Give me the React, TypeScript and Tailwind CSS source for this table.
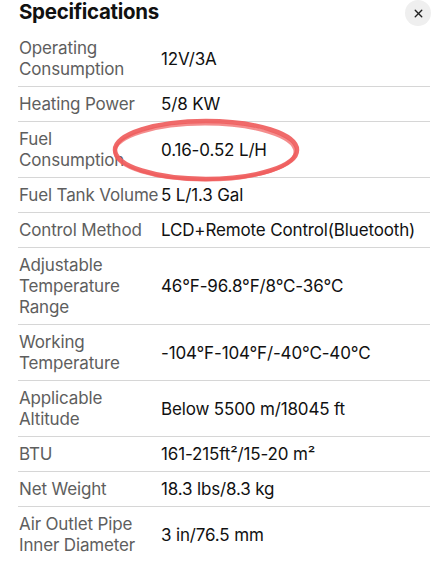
import { X } from 'lucide-react';

type Spec = { label: string[]; value: string };

const specs: Spec[] = [
  { label: ['Operating', 'Consumption'], value: '12V/3A' },
  { label: ['Heating Power'], value: '5/8 KW' },
  { label: ['Fuel', 'Consumption'], value: '0.16-0.52 L/H' },
  { label: ['Fuel Tank Volume'], value: '5 L/1.3 Gal' },
  { label: ['Control Method'], value: 'LCD+Remote Control(Bluetooth)' },
  { label: ['Adjustable', 'Temperature', 'Range'], value: '46°F-96.8°F/8°C-36°C' },
  { label: ['Working', 'Temperature'], value: '-104°F-104°F/-40°C-40°C' },
  { label: ['Applicable', 'Altitude'], value: 'Below 5500 m/18045 ft' },
  { label: ['BTU'], value: '161-215ft²/15-20 m²' },
  { label: ['Net Weight'], value: '18.3 lbs/8.3 kg' },
  { label: ['Air Outlet Pipe', 'Inner Diameter'], value: '3 in/76.5 mm' },
];

export default function App() {
  return (
    <div className="relative w-[448px] h-[575px] overflow-hidden bg-white px-[18px] font-['Inter','Liberation_Sans',sans-serif]">
      <div className="flex h-[31px] items-start justify-between">
        <h2 className="pl-px text-[20.5px] font-bold leading-[24px] tracking-[-0.3px] text-[#111]">
          Specifications
        </h2>
        <button
          className="-mr-px flex h-[26px] w-[26px] items-center justify-center rounded-full bg-[#efefef] text-[#222]"
          aria-label="Close"
        >
          <X className="h-[13px] w-[13px]" strokeWidth={2.6} />
        </button>
      </div>

      <div className="flex flex-col">
        {specs.map((s, i) => (
          <SpecRow key={s.value} spec={s} last={i === specs.length - 1} />
        ))}
      </div>

      {/* hand-drawn highlight around fuel consumption */}
      <svg
        className="pointer-events-none absolute left-0 top-0"
        width="448"
        height="575"
        viewBox="0 0 448 575"
      >
        <ellipse cx="206" cy="150" rx="91" ry="29" fill="none" stroke="#ef5d5d" strokeWidth="4.5" opacity="0.92" />
        <ellipse cx="205" cy="152" rx="90" ry="28" fill="none" stroke="#ef5d5d" strokeWidth="3" opacity="0.7" />
      </svg>
    </div>
  );
}

function SpecRow({ spec, last }: { spec: Spec; last: boolean }) {
  return (
    <div
      className={`flex items-center pt-[7px] pb-[6px] text-[17px] leading-[21px] tracking-[-0.15px] ${
        last ? '' : 'border-b border-[#d6d6d6]'
      }`}
    >
      <div className="w-[143px] shrink-0 pl-px text-[#5e5e5e]">
        {spec.label.map((l) => (
          <div key={l} className="whitespace-nowrap">{l}</div>
        ))}
      </div>
      <div className="whitespace-nowrap text-[#111]">{spec.value}</div>
    </div>
  );
}
